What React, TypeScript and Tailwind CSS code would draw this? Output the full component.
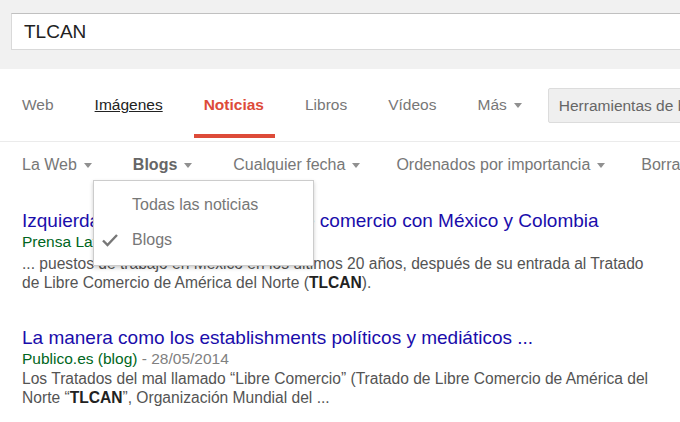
import React from "react";

const tabs = ["Web", "Imágenes", "Noticias", "Libros", "Vídeos"];

function Caret() {
    return <span className="inline-block w-0 h-0 border-x-[4.5px] border-x-transparent border-t-[5px] border-t-[#909090] ml-[7px] align-middle" />;
}

export default function App() {
    return <div className="relative w-[680px] h-[422px] overflow-hidden bg-white font-['Liberation_Sans',Arial,sans-serif]">
        {/* search header */}
        <div className="h-[69px] bg-[#f1f1f1] pt-[13px] pl-[11px]">
            <div className="w-[720px] h-[37px] bg-white border border-[#d9d9d9] border-t-[#c0c0c0] flex items-center pl-[12px]">
                <span className="text-[19px] text-[#222] mt-[1px]">TLCAN</span>
            </div>
        </div>

        {/* tabs */}
        <div className="h-[73px] border-b border-[#ebebeb] flex items-center pl-[22px] whitespace-nowrap">
            <div className="flex items-center gap-[41px] text-[15.5px] text-[#777]">
                {tabs.map((tab) => (
                    <span
                        key={tab}
                        className={
                            tab === "Noticias"
                                ? "relative font-bold text-[#dd4b39]"
                                : tab === "Imágenes"
                                ? "underline text-[#222]"
                                : ""
                        }
                    >
                        {tab}
                        {tab === "Noticias" && <span className="absolute -left-[10px] -right-[11px] top-[41px] h-[4px] bg-[#dd4b39]" />}
                    </span>
                ))}
                <span className="flex items-center">Más<Caret /></span>
            </div>
            <div className="ml-[26px] h-[35px] mt-[1px] px-[10px] flex items-center bg-[#efefef] border border-[#dcdcdc] rounded-[2px] text-[15.5px] text-[#666]">
                Herramientas de búsqueda
            </div>
        </div>

        {/* search tools */}
        <div className="h-[46px] flex items-center pl-[22px] text-[16px] text-[#777] whitespace-nowrap">
            <span className="flex items-center">La Web<Caret /></span>
            <span className="flex items-center ml-[41px] font-bold text-[#666]">Blogs<Caret /></span>
            <span className="flex items-center ml-[41px]">Cualquier fecha<Caret /></span>
            <span className="flex items-center ml-[36px]">Ordenados por importancia<Caret /></span>
            <span className="ml-[36px]">Borrar</span>
        </div>

        {/* results */}
        <div className="pl-[22px] pt-[22px]">
            <div>
                <div className="text-[19px] leading-[22px] text-[#1a0dab] whitespace-nowrap">Izquierda rechaza tratados de libre comercio con México y Colombia</div>
                <div className="text-[15.5px] leading-[20px] text-[#006621]">Prensa Latina (blog) <span className="text-[#808080]">- 29/05/2014</span></div>
                <div className="mt-[2px] text-[15.6px] leading-[19px] text-[#545454] w-[630px]">
                    ... puestos de trabajo en México en los últimos 20 años, después de su entrada al Tratado de Libre Comercio de América del Norte (<b className="text-[#222]">TLCAN</b>).
                </div>
            </div>
            <div className="mt-[35px]">
                <div className="text-[19px] leading-[22px] text-[#1a0dab] whitespace-nowrap">La manera como los establishments políticos y mediáticos ...</div>
                <div className="text-[15.5px] leading-[20px] text-[#006621]">Publico.es (blog) <span className="text-[#808080]">- 28/05/2014</span></div>
                <div className="text-[15.6px] leading-[19px] text-[#545454] w-[650px]">
                    Los Tratados del mal llamado “Libre Comercio” (Tratado de Libre Comercio de América del Norte “<b className="text-[#222]">TLCAN</b>”, Organización Mundial del ...
                </div>
            </div>
        </div>

        {/* dropdown menu */}
        <div className="absolute left-[93px] top-[180px] w-[221px] h-[86px] bg-white border border-black/20 shadow-[0_2px_4px_rgba(0,0,0,0.2)] text-[16px] text-[#777]">
            <div className="h-[18px] mt-[15px] pl-[38px] leading-[18px]">Todas las noticias</div>
            <div className="h-[18px] mt-[17px] pl-[38px] leading-[18px] relative">
                <svg className="absolute left-[7px] top-[1px]" width="18" height="16" viewBox="0 0 18 16">
                    <path d="M2 8.5 L6.5 13 L16 3" fill="none" stroke="#777" strokeWidth="2.4" />
                </svg>
                Blogs
            </div>
        </div>
    </div>;
}
